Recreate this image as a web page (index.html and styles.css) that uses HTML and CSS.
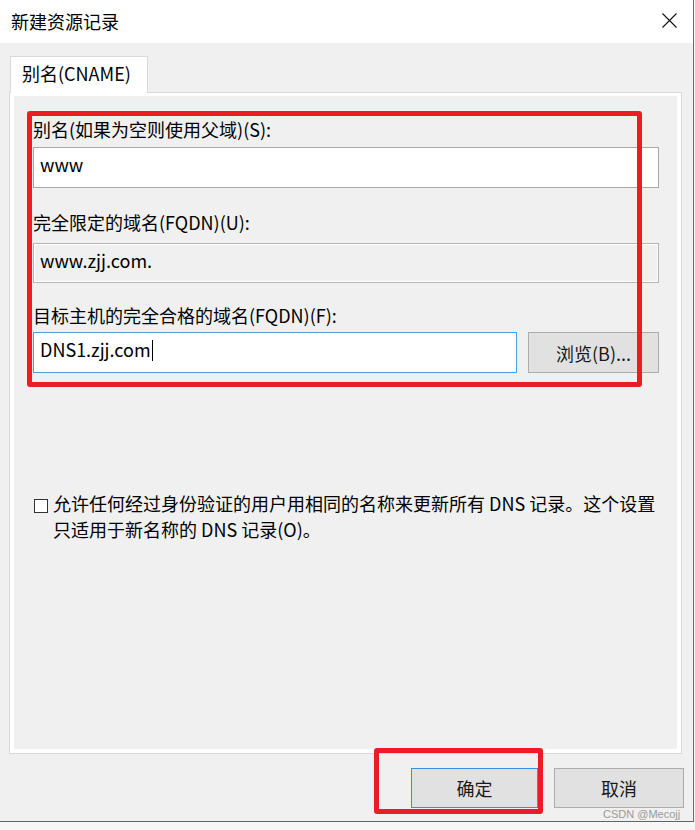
FILE: index.html
```html
<!DOCTYPE html>
<html lang="zh-CN">
<head>
<meta charset="utf-8">
<title>新建资源记录</title>
<link rel="stylesheet" href="styles.css">
</head>
<body>
<div class="window">
  <div class="titlebar">
    <span class="title">新建资源记录</span>
    <svg class="close" width="15" height="15" viewBox="0 0 15 15"><path d="M0.5 0.5 L14.5 14.5 M14.5 0.5 L0.5 14.5" stroke="#111" stroke-width="1.1" fill="none"/></svg>
  </div>
  <div class="main">
    <div class="tabs"><div class="tab">别名(CNAME)</div></div>
    <div class="panel">
      <div class="panel-body">
        <div class="field f1">
          <div class="label">别名(如果为空则使用父域)(S):</div>
          <div class="input">www</div>
        </div>
        <div class="field f2">
          <div class="label">完全限定的域名(FQDN)(U):</div>
          <div class="input readonly">www.zjj.com.</div>
        </div>
        <div class="field f3">
          <div class="label">目标主机的完全合格的域名(FQDN)(F):</div>
          <div class="input-row">
            <div class="input focused">DNS1.zjj.com<span class="caret"></span></div>
            <div class="btn browse">浏览(B)...</div>
          </div>
        </div>
        <div class="check-row">
          <span class="box"></span>
          <span class="check-text">允许任何经过身份验证的用户用相同的名称来更新所有 DNS 记录。这个设置<br>只适用于新名称的 DNS 记录(O)。</span>
        </div>
      </div>
    </div>
  </div>
  <div class="footer">
    <div class="btn ok">确定</div>
    <div class="btn cancel">取消</div>
  </div>
  <div class="mark mark-form"></div>
  <div class="mark mark-ok"></div>
  <div class="watermark">CSDN @Mecojj</div>
</div>
</body>
</html>
```

FILE: styles.css
```css
body {
  margin: 0;
  background: #f7f7f7;
  font-family: "Microsoft YaHei", "Noto Sans CJK SC", sans-serif;
  color: #000;
}

.window {
  position: relative;
  width: 694px;
  height: 822px;
  box-sizing: border-box;
  border-right: 1px solid #6b6b6b;
  border-bottom: 1px solid #646464;
  background: #f0f0f0;
  display: flex;
  flex-direction: column;
}

.titlebar {
  height: 43px;
  box-sizing: border-box;
  background: #fff;
  display: flex;
  justify-content: space-between;
  align-items: flex-start;
  padding: 9px 16px 0 11px;
}

.title {
  font-size: 18px;
  line-height: 24px;
}

.close {
  margin-top: 4px;
}

.main {
  padding: 13px 11px 0 9px;
}

.tabs {
  display: flex;
}

.tab {
  margin-left: 1px;
  width: 138px;
  height: 37px;
  box-sizing: border-box;
  border: 1px solid #d9d9d9;
  border-bottom: none;
  background: #fff;
  font-size: 18px;
  line-height: 33px;
  padding-left: 11px;
  margin-bottom: -1px;
  position: relative;
  z-index: 1;
}

.panel {
  height: 662px;
  box-sizing: border-box;
  border: 1px solid #d9d9d9;
}

.panel-body {
  height: 100%;
  box-sizing: border-box;
  border: 4px solid #fff;
  border-top-width: 3px;
  padding: 21px 18px 0 19px;
}

.label {
  font-size: 18px;
  line-height: 24px;
  white-space: nowrap;
}

.f1 .label { margin-bottom: 6px; }
.f2 { margin-top: 22px; }
.f2 .label { margin-bottom: 9px; }
.f3 { margin-top: 20px; }
.f3 .label { margin-bottom: 5px; }

.input {
  height: 41px;
  box-sizing: border-box;
  border: 1px solid #a9a9a9;
  background: #fff;
  font-size: 18px;
  line-height: 24px;
  padding: 4px 6px 0;
  white-space: nowrap;
}

.input.readonly {
  height: 40px;
  background: #f0f0f0;
  border-color: #b4b4b4;
  box-shadow: inset 0 0 0 1px #fff;
}

.input-row {
  display: flex;
  gap: 11px;
}

.input.focused {
  width: 484px;
  border-color: #4b9ee3;
}

.caret {
  display: inline-block;
  width: 1px;
  height: 21px;
  background: #000;
  vertical-align: -4px;
  margin-left: 1px;
}

.btn {
  height: 41px;
  box-sizing: border-box;
  background: #e1e1e1;
  border: 1px solid #adadad;
  font-size: 18px;
  display: flex;
  align-items: center;
  justify-content: center;
  color: #1a1a1a;
}

.browse {
  width: 131px;
}

.check-row {
  margin-top: 117px;
  display: flex;
  align-items: flex-start;
}

.box {
  width: 14px;
  height: 14px;
  box-sizing: border-box;
  border: 1px solid #333;
  background: #fff;
  margin: 9px 5px 0 1px;
  flex: none;
}

.check-text {
  font-size: 18px;
  line-height: 26px;
  white-space: nowrap;
}

.footer {
  display: flex;
  justify-content: flex-end;
  gap: 16px;
  padding: 14px 9px 0 0;
}

.footer .btn {
  height: 40px;
}

.ok {
  width: 127px;
  border-color: #3d8ee0;
}

.cancel {
  width: 130px;
}

.mark {
  position: absolute;
  box-sizing: border-box;
  border: 5px solid #ec1c24;
  border-radius: 3px;
}

.mark-form {
  left: 27px;
  top: 111px;
  width: 615px;
  height: 276px;
}

.mark-ok {
  left: 374px;
  top: 748px;
  width: 169px;
  height: 66px;
}

.watermark {
  position: absolute;
  left: 603px;
  top: 808px;
  font-family: "Liberation Sans", Arial, sans-serif;
  font-size: 11px;
  line-height: 12px;
  color: #9a9a9a;
}
```
